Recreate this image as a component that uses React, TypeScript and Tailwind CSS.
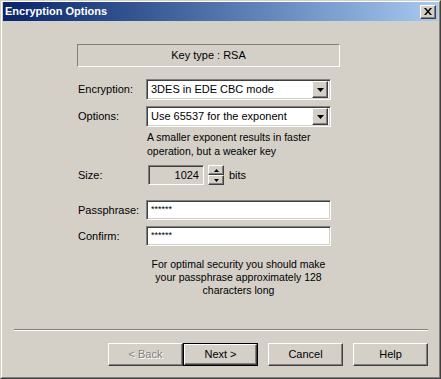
const FONT = { fontFamily: '"Liberation Sans", Arial, sans-serif' }

// classic 3D edges
const raised =
  'border border-t-white border-l-white border-r-[#404040] border-b-[#404040] shadow-[inset_-1px_-1px_#808080]'
const sunken =
  'border border-t-[#808080] border-l-[#808080] border-r-white border-b-white shadow-[inset_1px_1px_#404040,inset_-1px_-1px_#D4D0C8]'

function Arrow() {
  return (
    <svg width="7" height="4" viewBox="0 0 7 4">
      <polygon points="0,0 7,0 3.5,4" fill="#000" />
    </svg>
  )
}

function Combo({ value }: { value: string }) {
  return (
    <div className={`w-[185px] h-[21px] bg-white flex items-center p-[2px] ${sunken}`}>
      <span className="flex-1 pl-[2px] text-[11px] leading-none">{value}</span>
      <div className={`w-[16px] h-[17px] bg-[#D4D0C8] flex items-center justify-center ${raised}`}>
        <Arrow />
      </div>
    </div>
  )
}

function TextBox({ value }: { value: string }) {
  return (
    <div className={`w-[185px] h-[20px] bg-white flex items-start pt-[4px] pl-[4px] ${sunken}`}>
      <span className="text-[9px] leading-none">{value}</span>
    </div>
  )
}

function Button({ label, disabled, isDefault }: { label: string; disabled?: boolean; isDefault?: boolean }) {
  const inner = (
    <div className={`w-full h-full bg-[#D4D0C8] flex items-center justify-center ${raised}`}>
      <span
        className={`text-[11px] leading-none ${disabled ? 'text-[#808080] [text-shadow:1px_1px_#fff]' : 'text-black'}`}
      >
        {label}
      </span>
    </div>
  )
  if (isDefault) {
    return <div className="w-[75px] h-[23px] border border-black">{inner}</div>
  }
  return <div className="w-[75px] h-[23px]">{inner}</div>
}

function Spinner() {
  return (
    <div className="flex flex-col w-[16px] h-[20px]">
      <div className={`h-[10px] bg-[#D4D0C8] flex items-center justify-center ${raised}`}>
        <svg width="5" height="3" viewBox="0 0 5 3">
          <polygon points="2.5,0 5,3 0,3" fill="#000" />
        </svg>
      </div>
      <div className={`h-[10px] bg-[#D4D0C8] flex items-center justify-center ${raised}`}>
        <svg width="5" height="3" viewBox="0 0 5 3">
          <polygon points="0,0 5,0 2.5,3" fill="#000" />
        </svg>
      </div>
    </div>
  )
}

export default function App() {
  return (
    <div
      className="w-[441px] h-[379px] flex border border-t-[#D4D0C8] border-l-[#D4D0C8] border-r-[#404040] border-b-[#404040] bg-[#D4D0C8] text-black"
      style={FONT}
    >
      <div className="flex-1 flex flex-col border border-t-white border-l-white border-r-[#808080] border-b-[#808080] px-[1px]">
        {/* Title bar */}
        <div className="h-[19px] flex items-center bg-linear-to-r from-[#0A246A] to-[#A6CAF0] pl-[2px] pr-[2px]">
          <span className="flex-1 text-[11px] font-bold text-white leading-none">Encryption Options</span>
          <div className={`w-[16px] h-[14px] bg-[#D4D0C8] flex items-center justify-center ${raised}`}>
            <svg width="8" height="7" viewBox="0 0 8 7">
              <path d="M0 0h2l2 2.4L6 0h2L5 3.5 8 7H6L4 4.6 2 7H0l3-3.5z" fill="#000" />
            </svg>
          </div>
        </div>

        {/* Body */}
        <div className="flex-1 flex flex-col text-[11px]">
          <div className="ml-[74px] mt-[23px] w-[263px] h-[23px] border border-t-[#808080] border-l-[#808080] border-r-white border-b-white flex items-center justify-center">
            Key type : RSA
          </div>

          <div className="ml-[75px] mt-[12px] flex items-center">
            <span className="w-[68px]">Encryption:</span>
            <Combo value="3DES in EDE CBC mode" />
          </div>

          <div className="ml-[75px] mt-[6px] flex items-center">
            <span className="w-[68px]">Options:</span>
            <Combo value="Use 65537 for the exponent" />
          </div>

          <div className="ml-[144px] mt-[3px] text-[10.5px] leading-[14px]">
            <p>A smaller exponent results in faster</p>
            <p>operation, but a weaker key</p>
          </div>

          <div className="ml-[75px] mt-[7px] flex items-center">
            <span className="w-[70px]">Size:</span>
            <div className={`w-[56px] h-[20px] bg-[#D4D0C8] flex items-center justify-end pr-[4px] ${sunken}`}>
              <span className="leading-none">1024</span>
            </div>
            <div className="ml-[4px]">
              <Spinner />
            </div>
            <span className="ml-[5px]">bits</span>
          </div>

          <div className="ml-[75px] mt-[15px] flex items-center">
            <span className="w-[68px]">Passphrase:</span>
            <TextBox value="******" />
          </div>

          <div className="ml-[75px] mt-[6px] flex items-center">
            <span className="w-[68px]">Confirm:</span>
            <TextBox value="******" />
          </div>

          <div className="ml-[143px] mt-[12px] w-[185px] text-center text-[10.5px] leading-[13px]">
            <p>For optimal security you should make</p>
            <p>your passphrase approximately 128</p>
            <p>characters long</p>
          </div>

          {/* Separator */}
          <div className="mt-auto ml-[11px] mr-[10px] h-[2px] border-t border-t-[#808080] border-b border-b-white" />

          {/* Buttons */}
          <div className="mt-[12px] mb-[11px] mr-[10px] flex justify-end">
            <Button label="< Back" disabled />
            <Button label="Next >" isDefault />
            <div className="w-[10px]" />
            <Button label="Cancel" />
            <div className="w-[10px]" />
            <Button label="Help" />
          </div>
        </div>
      </div>
    </div>
  )
}
